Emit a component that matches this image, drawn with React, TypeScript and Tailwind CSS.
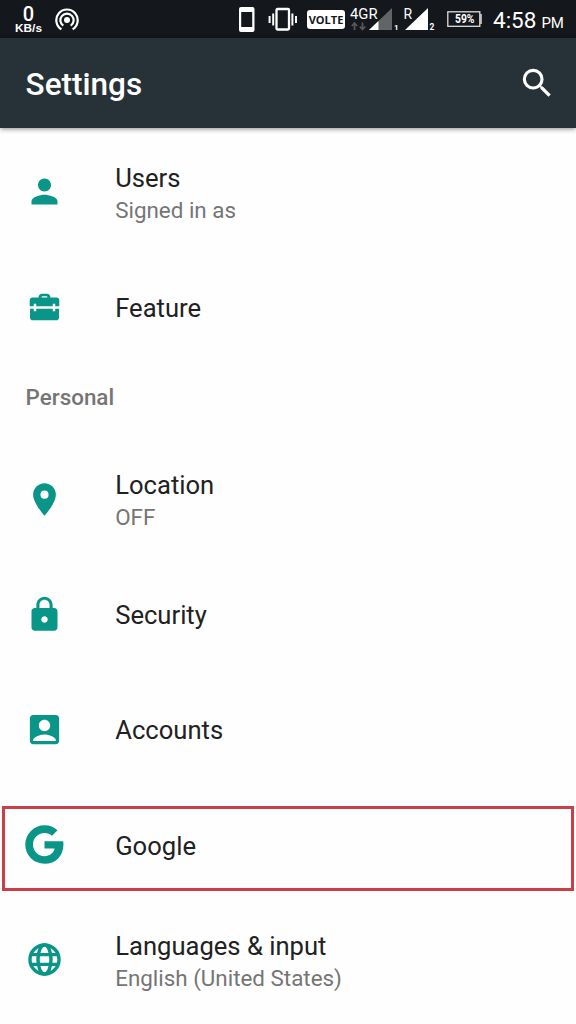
import type { ReactNode } from "react";
import { MdAccountBox, MdPerson, MdPlace, MdSearch } from "react-icons/md";

function ToolboxIcon() {
  return (
    <svg viewBox="0 0 24 24" className="size-full" fill="currentColor">
      <path
        fillRule="evenodd"
        d="M8.400 5.800V5.500c0-1.100.9-2 2-2h3.200c1.100 0 2 .9 2 2v.3h3.800c1 0 1.700.7 1.700 1.700v3.700h-2.500V9.700h-1.500v1.500H6.900V9.700H5.400v1.500H2.900V7.500c0-1 .7-1.700 1.700-1.700h3.800zm1.800 0h3.600c0-.5-.2-.8-.6-.8h-2.400c-.4 0-.6.3-.6.800z"
      />
      <path d="M3.100 12.700h2.300v1.600h1.500v-1.600h10.200v1.600h1.500v-1.600h2.300v5.600c0 .9-.7 1.600-1.600 1.600H4.700c-.9 0-1.600-.7-1.600-1.600v-5.600z" />
    </svg>
  );
}

function LockIcon() {
  return (
    <svg viewBox="0 0 24 24" className="size-full" fill="currentColor">
      <path
        fillRule="evenodd"
        d="M18 8h-1V6c0-2.760-2.240-5-5-5S7 3.240 7 6v2H6c-1.100 0-2 .9-2 2v10c0 1.100.9 2 2 2h12c1.100 0 2-.9 2-2V10c0-1.100-.9-2-2-2zm-6 9c-1.100 0-2-.9-2-2s.9-2 2-2 2 .9 2 2-.9 2-2 2zm3.100-9H8.900V6c0-1.710 1.390-3.100 3.100-3.100s3.100 1.390 3.100 3.100v2z"
      />
    </svg>
  );
}

function GoogleIcon() {
  return (
    <svg viewBox="0 0 24 24" className="size-full" fill="currentColor">
      <path d="M12 10h11.500c.1.650.15 1.300.15 2C23.650 19 19 23.900 12 23.900A11.850 11.850 0 0 1 12 .2c3.200 0 5.900 1.150 8 3.100l-3.400 3.350C15.400 5.500 13.800 4.900 12 4.900c-3.950 0-7.100 3.200-7.100 7.150s3.150 7.150 7.100 7.150c3.200 0 5.500-1.800 6.300-4.700H12V10z" />
    </svg>
  );
}

function GlobeIcon() {
  return (
    <svg viewBox="0 0 24 24" className="size-full" fill="none" stroke="currentColor" strokeWidth="2.100">
      <circle cx="12" cy="12" r="8.950" />
      <ellipse cx="12" cy="12" rx="4" ry="9" />
      <path d="M3.500 9h17M3.500 15h17" />
    </svg>
  );
}

function HotspotIcon() {
  return (
    <svg viewBox="0 0 24 24" className="ml-[13px] mt-[8px] size-6" fill="none" stroke="#fff" strokeWidth="2.200">
      <circle cx="12" cy="12" r="3" fill="#fff" stroke="none" />
      <path d="M8.300 17.700a6.600 6.600 0 1 1 7.400 0M6.400 21.300a10.700 10.700 0 1 1 11.200 0" />
    </svg>
  );
}

function PhoneIcon() {
  return (
    <svg viewBox="0 0 16 26" className="ml-[160px] mt-[7px] h-[26px] w-4">
      <path
        fill="#fff"
        fillRule="evenodd"
        d="M2 0h11.500a2 2 0 0 1 2 2v21a2 2 0 0 1-2 2H2a2 2 0 0 1-2-2V2a2 2 0 0 1 2-2zm.2 5v15h11V5z"
      />
    </svg>
  );
}

function VibrateIcon() {
  return (
    <svg viewBox="0 0 30 24" className="ml-[13px] mt-[7px] h-6 w-[30px]" fill="none" stroke="#fff">
      <rect x="8.500" y="2" width="12.500" height="20.500" rx="1" strokeWidth="2.300" />
      <path d="M5.200 6.500v12M24.400 6.500v12M1.600 9v7M28 9v7" strokeWidth="2" />
    </svg>
  );
}

function SignalIcons() {
  return (
    <svg viewBox="350 0 86 38" className="ml-[5px] h-[38px] w-[86px] font-[Roboto,sans-serif]">
      <path d="M369 30 392 8v22z" fill="#626466" />
      <path d="M369 30 378.500 21V30z" fill="#fff" />
      <path d="M405 30 428 8v22z" fill="#fff" />
      <path d="M354.500 30v-7M351.800 26l2.700-3 2.700 3M362.500 22.500v7M359.800 26.500l2.700 3 2.700-3" fill="none" stroke="#55585a" strokeWidth="1.800" />
      <text x="350" y="19" fontSize="15" fill="#fff" textLength="27.500" lengthAdjust="spacingAndGlyphs">4GR</text>
      <text x="403.500" y="18.500" fontSize="14" fill="#fff">R</text>
      <text x="394" y="30" fontSize="8" fontWeight="700" fill="#fff">1</text>
      <text x="429.500" y="30" fontSize="8.500" fontWeight="700" fill="#fff">2</text>
    </svg>
  );
}

function BatteryIcon() {
  return (
    <svg viewBox="0 0 36 18" className="ml-[11px] mt-[10px] h-[18px] w-9 font-[Roboto,sans-serif]">
      <rect x="0.800" y="1.800" width="32" height="14.500" fill="none" stroke="#ddd" strokeWidth="1.300" />
      <path d="M34 4v10" stroke="#ddd" strokeWidth="1.500" />
      <text x="8" y="13.300" fontSize="12" fontWeight="700" fill="#fff" textLength="19.500" lengthAdjust="spacingAndGlyphs">59%</text>
    </svg>
  );
}

function SpeedMeter() {
  return (
    <svg viewBox="0 0 28 38" className="ml-[14px] h-[38px] w-7" fill="#fff" textAnchor="middle">
      <text x="14.500" y="20.500" fontSize="20" fontWeight="500" className="font-[Roboto,sans-serif]">0</text>
      <text x="14.500" y="32" fontSize="11" fontWeight="700" textLength="27" lengthAdjust="spacingAndGlyphs" className="font-['Liberation_Sans',sans-serif]">KB/s</text>
    </svg>
  );
}

function StatusBar() {
  return (
    <div className="flex h-[38px] items-start whitespace-nowrap bg-[#14171b] text-white">
      <SpeedMeter />
      <HotspotIcon />
      <PhoneIcon />
      <VibrateIcon />
      <div className="ml-[9px] mt-[10px] flex h-[19px] w-[38px] items-center justify-center rounded-[3px] bg-white font-['Open_Sans',sans-serif] text-[11px] font-bold leading-none text-[#14171b]">
        VOLTE
      </div>
      <SignalIcons />
      <BatteryIcon />
      <div className="ml-[10px] flex items-baseline gap-[5px] pt-[7px]">
        <span className="text-[22.5px] leading-[26px]">4:58</span>
        <span className="text-[15px]">PM</span>
      </div>
    </div>
  );
}

function Row({ icon, title, subtitle }: { icon: ReactNode; title: string; subtitle?: string }) {
  return (
    <li className="flex h-[115.2px] items-center pl-[25px]">
      <span className="size-[39px] shrink-0 text-[#099587]">{icon}</span>
      <div className="ml-[51.2px] flex flex-col pt-[1.6px]">
        <span className="text-[25.6px] leading-[34px] text-[#212121]">{title}</span>
        {subtitle && <span className="text-[22.4px] leading-[30px] text-[#757575]">{subtitle}</span>}
      </div>
    </li>
  );
}

export default function App() {
  return (
    <div className="relative h-[1024px] w-[576px] overflow-hidden bg-[#fefefe] font-[Roboto,sans-serif]">
      <StatusBar />
      <header className="flex h-[90px] items-center justify-between bg-[#273238] pl-[25.6px] pr-[20px] text-white shadow-[0_1px_5px_rgba(0,0,0,0.45)]">
        <h1 className="pt-1 text-[31.5px] font-medium leading-10">Settings</h1>
        <MdSearch className="size-[38.4px]" />
      </header>
      <main className="pt-[6.4px]">
        <ul>
          <Row icon={<MdPerson className="size-full" />} title="Users" subtitle="Signed in as" />
          <Row icon={<ToolboxIcon />} title="Feature" />
        </ul>
        <h2 className="h-[76.8px] pl-[25.6px] pt-[16px] text-[22.4px] font-medium leading-[32px] text-[#757575]">Personal</h2>
        <ul>
          <Row icon={<MdPlace className="size-full" />} title="Location" subtitle="OFF" />
          <Row icon={<LockIcon />} title="Security" />
          <Row icon={<MdAccountBox className="size-full" />} title="Accounts" />
          <Row icon={<GoogleIcon />} title="Google" />
          <Row icon={<GlobeIcon />} title="Languages & input" subtitle="English (United States)" />
        </ul>
      </main>
      <div className="pointer-events-none absolute left-[2px] top-[806px] h-[85px] w-[572px] border-3 border-[#c93f47]" />
    </div>
  );
}
